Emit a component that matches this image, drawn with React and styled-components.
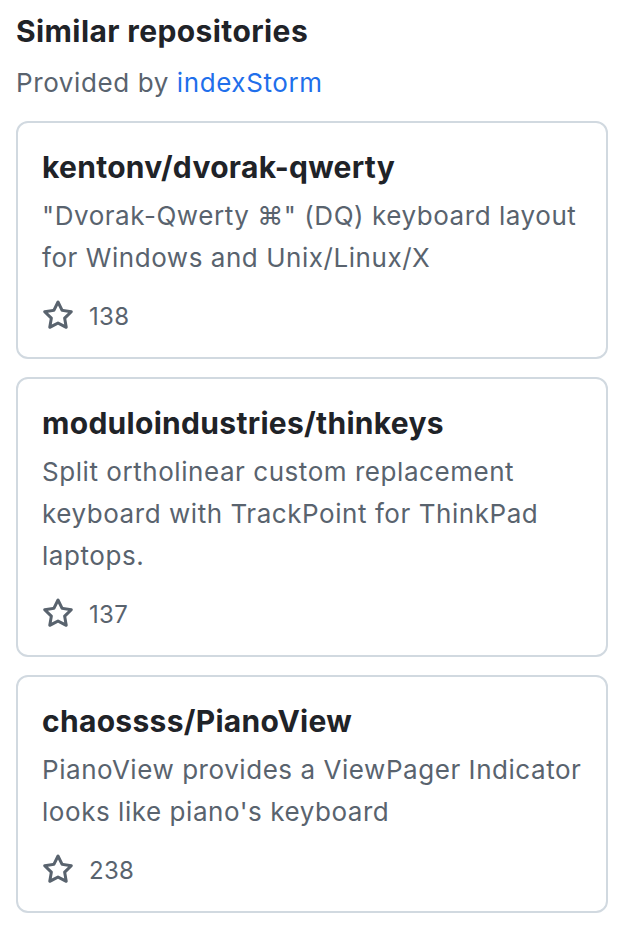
import styled, { createGlobalStyle } from 'styled-components';

const GlobalStyle = createGlobalStyle`
    body {
        margin: 0;
        background: #ffffff;
        font-family: Inter, "Noto Sans", "DejaVu Sans", sans-serif;
        -webkit-font-smoothing: antialiased;
    }
`;

const Sidebar = styled.div`
    padding: 11px 18px 16px 16px;
`;
const Heading = styled.h2`
    margin: 0 0 11px;
    font-size: 30px;
    line-height: 40px;
    font-weight: 700;
    color: #1f2328;
    letter-spacing: 0.4px;
`;
const Provider = styled.p`
    margin: 0 0 17px;
    font-size: 26px;
    line-height: 42px;
    color: #59636e;
    letter-spacing: 0.6px;
`;
const ProviderLink = styled.a`
    color: #1f6feb;
    text-decoration: none;
`;
const CardList = styled.div`
    display: flex;
    flex-direction: column;
    gap: 18px;
`;
const Card = styled.div`
    display: flex;
    flex-direction: column;
    border: 2px solid #d1d9e0;
    border-radius: 12px;
    padding: 24px 22px 25px 24px;
`;
const RepoName = styled.a`
    font-size: 30px;
    line-height: 40px;
    font-weight: 700;
    color: #1f2328;
    text-decoration: none;
    letter-spacing: 0.3px;
`;
const Description = styled.p`
    margin: 8px 0 0;
    font-size: 26px;
    line-height: 42px;
    color: #59636e;
    letter-spacing: 0.55px;
`;
const Stars = styled.div`
    display: flex;
    align-items: center;
    gap: 15px;
    margin-top: 21px;
    height: 32px;
    font-size: 24px;
    color: #59636e;
    letter-spacing: 0.3px;
`;

const StarIcon = () => (
    <svg width="32" height="32" viewBox="0 0 16 16" fill="#59636e" aria-hidden="true">
        <path d="M8 .25a.75.75 0 0 1 .673.418l1.882 3.815 4.21.612a.75.75 0 0 1 .416 1.279l-3.046 2.97.719 4.192a.751.751 0 0 1-1.088.791L8 12.347l-3.766 1.98a.75.75 0 0 1-1.088-.79l.72-4.194L.818 6.374a.75.75 0 0 1 .416-1.28l4.21-.611L7.327.668A.75.75 0 0 1 8 .25Zm0 2.445L6.615 5.5a.75.75 0 0 1-.564.41l-3.097.45 2.24 2.184a.75.75 0 0 1 .216.664l-.528 3.084 2.769-1.456a.75.75 0 0 1 .698 0l2.77 1.456-.53-3.084a.75.75 0 0 1 .216-.664l2.24-2.183-3.096-.45a.75.75 0 0 1-.564-.41L8 2.694Z" />
    </svg>
);

const repos = [
    {
        name: 'kentonv/dvorak-qwerty',
        description: '"Dvorak-Qwerty ⌘" (DQ) keyboard layout for Windows and Unix/Linux/X',
        stars: 138,
    },
    {
        name: 'moduloindustries/thinkeys',
        description: 'Split ortholinear custom replacement keyboard with TrackPoint for ThinkPad laptops.',
        stars: 137,
    },
    {
        name: 'chaossss/PianoView',
        description: "PianoView provides a ViewPager Indicator looks like piano's keyboard",
        stars: 238,
    },
];

export default function App() {
    return (
        <Sidebar>
            <GlobalStyle />
            <Heading>Similar repositories</Heading>
            <Provider>
                Provided by <ProviderLink href="#">indexStorm</ProviderLink>
            </Provider>
            <CardList>
                {repos.map((repo) => (
                    <Card key={repo.name}>
                        <RepoName href="#">{repo.name}</RepoName>
                        <Description>{repo.description}</Description>
                        <Stars>
                            <StarIcon />
                            <span>{repo.stars}</span>
                        </Stars>
                    </Card>
                ))}
            </CardList>
        </Sidebar>
    );
}
